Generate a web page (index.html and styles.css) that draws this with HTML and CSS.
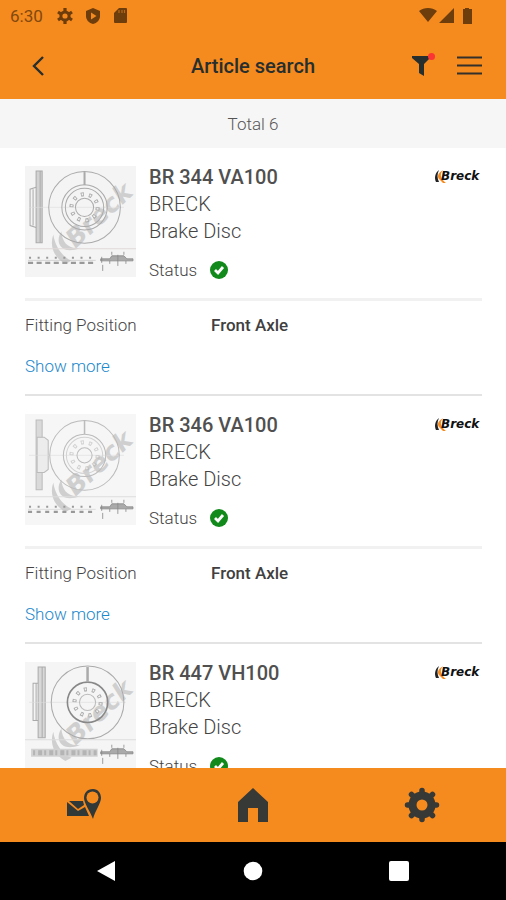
FILE: index.html
```html
<!DOCTYPE html>
<html lang="en">
<head>
    <meta charset="UTF-8">
    <meta name="viewport" content="width=device-width, initial-scale=1.0">
    <title>Article search</title>
    <link rel="stylesheet" href="styles.css">
</head>
<body>
    <!-- shared shapes -->
    <svg class="sprite" aria-hidden="true">
        <symbol id="logo" viewBox="0 0 48 18">
            <path d="M5 3C1 6 0 11 2 15L5 15C3 11 3 7 5 3Z" fill="#222"/>
            <path d="M9 3C4 6 3 9 5 12L9 16L12 16C7 12 5 8 9 3Z" fill="#f58a1f"/>
            <text x="7" y="13" class="logo-text">Breck</text>
        </symbol>
        <symbol id="check" viewBox="0 0 18 18">
            <circle cx="9" cy="9" r="9" fill="#11891b"/>
            <path d="M5 9L8 12L13 6" fill="none" stroke="#fff" stroke-width="2.8"/>
        </symbol>
        <symbol id="watermark" viewBox="0 0 110 110">
            <g fill="#cfcfcf">
                <path d="M28 68C24 80 29 91 40 97L46 94C36 89 30 80 28 68Z"/>
                <path d="M36 65C29 76 36 89 55 81C43 83 37 76 36 65Z"/>
                <text x="50" y="82" class="watermark-text" transform="rotate(-43 50 82)">Breck</text>
            </g>
        </symbol>
        <symbol id="section" viewBox="0 0 110 110">
            <path d="M75 92H84L86 89H98L101 92H107V94H75ZM84 94V97M100 94V97M92 88V99M76 90V96M77 98V104M86 85V88M98 85V88" fill="#aaa" stroke="#888" stroke-width=".8"/>
        </symbol>
        <symbol id="holes" viewBox="-20 -20 40 40">
            <circle r="13" fill="none" stroke="#aaa" stroke-width="4" stroke-dasharray="3 5.17"/>
            <circle r="13" fill="none" stroke="#f3f3f3" stroke-width="2" stroke-dasharray="1.5 6.67" stroke-dashoffset="-.75"/>
        </symbol>
    </svg>

    <header class="top">
        <div class="statusbar">
            <span class="clock">6:30</span>
            <svg width="16" height="16" viewBox="0 0 16 16"><circle cx="8" cy="8" r="4.1" fill="none" stroke="#6d3d0c" stroke-width="3"/><path d="M8 0V3M8 13V16M1 4L4 6M12 10L15 12M1 12L4 10M12 6L15 4" stroke="#6d3d0c" stroke-width="3.2"/></svg>
            <svg width="16" height="16" viewBox="0 0 16 16"><path d="M8 0L15 3V8C15 12 12 15 8 16C4 15 1 12 1 8V3Z" fill="#6d3d0c"/><path d="M6 4.5L11.5 8L6 11.5Z" fill="#f58a1f"/></svg>
            <svg width="16" height="16" viewBox="0 0 16 16"><path d="M6 0H13Q14 0 14 1V14Q14 15 13 15H2Q1 15 1 14V5Z" fill="#6d3d0c"/><path d="M6 2V5M9 2V5M11.5 2V5" stroke="#b8681a" stroke-width="1.2"/></svg>
            <svg class="signal" width="54" height="16" viewBox="0 0 54 16"><path d="M0 3C5 -1 13 -1 18 3L9 14ZM20 15L35 0V15ZM44 1H46V0H50V1H53V16H44Z" fill="#6d3d0c"/></svg>
        </div>
        <div class="toolbar">
            <button class="icon-btn back" aria-label="Back">
                <svg width="14" height="22" viewBox="0 0 14 22"><path d="M12 2L3 11L12 20" fill="none" stroke="#272e2e" stroke-width="2.4"/></svg>
            </button>
            <h1>Article search</h1>
            <div class="actions">
                <button class="icon-btn filter" aria-label="Filter">
                    <svg width="18" height="20" viewBox="0 0 18 20"><path d="M0 0H18V2L12 8V20L7 17V8L0 2Z" fill="#272e2e"/></svg>
                    <span class="dot"></span>
                </button>
                <button class="icon-btn" aria-label="Menu">
                    <svg width="25" height="20" viewBox="0 0 25 20"><path d="M0 1.5H25M0 9.5H25M0 17.5H25" stroke="#33302b" stroke-width="2.2"/></svg>
                </button>
            </div>
        </div>
    </header>

    <div class="total">Total 6</div>

    <main class="list">
        <article class="item">
            <div class="summary">
                <svg class="drawing" viewBox="0 0 110 110">
                    <rect width="110" height="110" fill="#f4f4f4"/>
                    <use href="#watermark"/>
                    <g fill="none" stroke="#aaa">
                        <path d="M11 5H17V76H11Z" fill="#d2d2d2"/>
                        <path d="M11 21L5 23V59L11 61M8 23V59M15 5V76"/>
                        <path d="M4 41H18M18 41H98" stroke="#ddd" stroke-width=".6"/>
                        <circle cx="59" cy="41" r="35.5"/>
                        <circle cx="59" cy="41" r="22.5"/>
                        <circle cx="59" cy="41" r="19"/>
                        <circle cx="59" cy="41" r="9"/>
                        <path d="M59 6V19" stroke-width="2"/>
                    </g>
                    <use href="#holes" x="39" y="21" width="40" height="40"/>
                    <path d="M0 82H110" stroke="#e2d8d8"/>
                    <path d="M4 91H69" stroke="#999" stroke-width="2" stroke-dasharray="2 6.5"/>
                    <path d="M3 96H70" stroke="#999" stroke-width="2" stroke-dasharray="5 3.5"/>
                    <path d="M3 93.5H70" stroke="#bbb" stroke-width=".6"/>
                    <use href="#section"/>
                </svg>
                <div class="info">
                    <h2>BR 344 VA100</h2>
                    <p>BRECK</p>
                    <p>Brake Disc</p>
                    <div class="status">Status <svg width="18" height="18"><use href="#check"/></svg></div>
                </div>
                <svg class="logo" role="img" aria-label="Breck"><use href="#logo"/></svg>
            </div>
            <dl class="detail">
                <dt>Fitting Position</dt>
                <dd>Front Axle</dd>
            </dl>
            <a class="more" href="#">Show more</a>
        </article>

        <article class="item">
            <div class="summary">
                <svg class="drawing" viewBox="0 0 110 110">
                    <rect width="110" height="110" fill="#f6f6f6"/>
                    <use href="#watermark"/>
                    <g fill="none" stroke="#bbb">
                        <path d="M11 6H17V75H11Z" fill="#dadada"/>
                        <path d="M12 23H19L23 26V55L19 58H12Z" fill="#ececec"/>
                        <path d="M4 41H98" stroke="#ddd" stroke-width=".6"/>
                        <circle cx="59" cy="41" r="34.5"/>
                        <circle cx="59" cy="41" r="21"/>
                        <circle cx="59" cy="41" r="18" stroke="#d2d2d2"/>
                        <circle cx="59" cy="41" r="7.5"/>
                        <path d="M59 6V20" stroke-width="1.5"/>
                    </g>
                    <use href="#holes" x="39" y="21" width="40" height="40" opacity=".5"/>
                    <path d="M0 82H110" stroke="#ddd"/>
                    <path d="M4 92H69" stroke="#999" stroke-width="2" stroke-dasharray="2 6.5"/>
                    <path d="M3 97H70" stroke="#999" stroke-width="2" stroke-dasharray="4 4.5"/>
                    <path d="M3 94.5H70" stroke="#ccc" stroke-width=".6"/>
                    <use href="#section"/>
                </svg>
                <div class="info">
                    <h2>BR 346 VA100</h2>
                    <p>BRECK</p>
                    <p>Brake Disc</p>
                    <div class="status">Status <svg width="18" height="18"><use href="#check"/></svg></div>
                </div>
                <svg class="logo" role="img" aria-label="Breck"><use href="#logo"/></svg>
            </div>
            <dl class="detail">
                <dt>Fitting Position</dt>
                <dd>Front Axle</dd>
            </dl>
            <a class="more" href="#">Show more</a>
        </article>

        <article class="item">
            <div class="summary">
                <svg class="drawing" viewBox="0 0 110 110">
                    <rect width="110" height="110" fill="#f5f5f5"/>
                    <use href="#watermark" y="1"/>
                    <g fill="none" stroke="#aaa">
                        <path d="M13 5H20V75H13Z" fill="#d8d8d8"/>
                        <path d="M13 21H8V58H13M11 21V58M17 5V75"/>
                        <path d="M4 40H100" stroke="#ddd" stroke-width=".6"/>
                        <circle cx="62" cy="40" r="36"/>
                        <circle cx="62" cy="40" r="20" stroke="#888" stroke-width="1.6"/>
                        <circle cx="62" cy="40" r="8" stroke="#bbb"/>
                        <path d="M62 5V20" stroke-width="2.5"/>
                    </g>
                    <use href="#holes" x="42" y="20" width="40" height="40"/>
                    <path d="M0 77H110" stroke="#ddd"/>
                    <path d="M6 90H72" stroke="#d2d2d2" stroke-width="8"/>
                    <path d="M8 90H71" stroke="#b4b4b4" stroke-width="5" stroke-dasharray="2 3 4 2"/>
                    <use href="#section" y="-3"/>
                </svg>
                <div class="info">
                    <h2>BR 447 VH100</h2>
                    <p>BRECK</p>
                    <p>Brake Disc</p>
                    <div class="status">Status <svg width="18" height="18"><use href="#check"/></svg></div>
                </div>
                <svg class="logo" role="img" aria-label="Breck"><use href="#logo"/></svg>
            </div>
        </article>
    </main>

    <nav class="tabs">
        <a href="#" aria-label="Contact">
            <svg width="36" height="36" viewBox="0 0 36 36"><path d="M3 14H17L18 18L12 22ZM1 15L12 24L19 20L23 29H1Z" fill="#303838"/><path d="M27 2C21 2 18 6 18 11C18 16 24 24 27 32C29 24 35 16 35 11C35 6 32 2 27 2Z" fill="#303838"/><circle cx="26.5" cy="10.5" r="6" fill="#f58a1f"/></svg>
        </a>
        <a href="#" aria-label="Home">
            <svg width="32" height="36" viewBox="0 0 32 36"><path d="M16 1L31 15V35H21V21H11V35H1V15Z" fill="#363936"/></svg>
        </a>
        <a href="#" aria-label="Settings">
            <svg width="36" height="36" viewBox="-18 -18 36 36"><circle r="9.5" fill="none" stroke="#363936" stroke-width="8"/><g stroke="#363936" stroke-width="5.5" stroke-linecap="round"><path d="M0 -14.5V-12M0 14.5V12M-14.5 0H-12M14.5 0H12M-10.5 -10.5L-9 -9M10.5 10.5L9 9M10.5 -10.5L9 -9M-10.5 10.5L-9 9"/></g></svg>
        </a>
    </nav>

    <footer class="system">
        <button aria-label="System back"><svg width="20" height="22" viewBox="0 0 20 22"><path d="M1 11L19 1V21Z" fill="#fff"/></svg></button>
        <button aria-label="System home"><svg width="20" height="20" viewBox="0 0 20 20"><circle cx="10" cy="10" r="9.3" fill="#fff"/></svg></button>
        <button aria-label="Recent apps"><svg width="20" height="20" viewBox="0 0 20 20"><rect width="20" height="20" rx="2" fill="#fff"/></svg></button>
    </footer>
</body>
</html>
```
FILE: styles.css
```css
* {
    box-sizing: border-box;
}
body {
    margin: 0;
    height: 100vh;
    display: flex;
    flex-direction: column;
    font-family: Roboto, "Liberation Sans", sans-serif;
    font-size: 17px;
    font-weight: 300;
    line-height: 24px;
    color: #444;
    background-color: #fff;
}
h1, h2, p, dl, dd {
    margin: 0;
}
svg {
    display: block;
    flex-shrink: 0;
}
button {
    padding: 0;
    border: none;
    background: none;
    cursor: pointer;
}
.sprite {
    display: none;
}
.top {
    background-color: #f58a1f;
}
.statusbar {
    display: flex;
    align-items: center;
    gap: 12px;
    height: 32px;
    padding: 0 33px 0 10px;
    color: #81490f;
}
.clock {
    margin-right: 2px;
    font-weight: 400;
}
.signal {
    margin-left: auto;
}
.toolbar {
    display: grid;
    grid-template-columns: 1fr auto 1fr;
    align-items: center;
    height: 67px;
    padding: 0 24px;
}
.toolbar h1 {
    font-size: 20px;
    font-weight: 500;
    color: #272e2e;
}
.icon-btn {
    justify-self: start;
}
.back {
    padding-left: 7px;
}
.actions {
    display: flex;
    align-items: center;
    justify-content: flex-end;
    gap: 27px;
}
.filter {
    position: relative;
}
.dot {
    position: absolute;
    top: -3px;
    right: -5px;
    width: 7px;
    height: 7px;
    border-radius: 50%;
    background-color: #fb3434;
}
.total {
    height: 49px;
    line-height: 51px;
    text-align: center;
    color: #555;
    background-color: #f6f6f6;
}
.list {
    flex: 1;
    min-height: 0;
    overflow: hidden;
    padding: 0 24px 0 25px;
}
.item {
    padding: 16px 0;
    border-bottom: 2px solid #e3e3e3;
}
.summary {
    display: flex;
    align-items: flex-start;
    padding-bottom: 16px;
    border-bottom: 3px solid #f1f1f1;
}
.drawing {
    width: 111px;
    height: 111px;
    margin-top: 2px;
}
.info {
    flex: 1;
    padding-left: 13px;
    font-size: 20px;
    line-height: 27px;
}
.info h2 {
    font-size: 20px;
    font-weight: 500;
    color: #505050;
}
.status {
    display: flex;
    align-items: center;
    gap: 13px;
    margin-top: 13px;
    font-size: 17px;
    line-height: 24px;
}
.logo {
    width: 48px;
    height: 18px;
    margin-top: 3px;
}
.logo-text {
    font: italic bold 12px "DejaVu Sans", sans-serif;
    fill: #111;
}
.watermark-text {
    font: italic bold 25px "DejaVu Sans", sans-serif;
}
.detail {
    display: grid;
    grid-template-columns: 186px 1fr;
    padding-top: 12px;
}
.detail dd {
    font-weight: 500;
    color: #404040;
}
.more {
    display: inline-block;
    margin-top: 17px;
    color: #1c88cc;
    text-decoration: none;
    vertical-align: top;
}
.tabs {
    display: grid;
    grid-template-columns: repeat(3, 1fr);
    justify-items: center;
    align-items: center;
    height: 74px;
    background-color: #f58a1f;
}
.system {
    display: flex;
    align-items: center;
    justify-content: space-between;
    height: 58px;
    padding: 0 97px 0 96px;
    background-color: #000;
}
```
